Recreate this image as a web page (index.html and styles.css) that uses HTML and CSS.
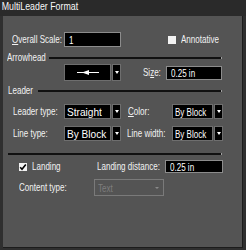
FILE: index.html
```html
<!DOCTYPE html>
<html>
<head>
<meta charset="utf-8">
<link rel="stylesheet" href="styles.css">
</head>
<body>
<div class="window">
  <div class="titlebar"><span class="ttext">MultiLeader Format</span></div>
  <div class="panel">
    <div class="row r1">
      <div class="lab w52"><span class="t"><u>O</u>verall Scale:</span></div>
      <div class="input w57"><span class="t">1</span></div>
      <div class="chk ml47"></div>
      <div class="lab ml5"><span class="t">Annotative</span></div>
    </div>

    <div class="hdr h-arrow">
      <div class="lab w42"><span class="t">Arrowhead</span></div>
      <div class="rule"></div>
    </div>

    <div class="row r-arrow">
      <div class="combo">
        <div class="cbox w47 center">
          <svg width="22" height="7" viewBox="0 0 22 7"><line x1="0" y1="3.5" x2="22" y2="3.5" stroke="#fff" stroke-width="1"/><polygon points="5,3.5 12,1 12,6" fill="#fff"/></svg>
        </div>
        <div class="cbtn"><span class="tri"></span></div>
      </div>
      <div class="lab ml22 w23"><span class="t">Si<u>z</u>e:</span></div>
      <div class="input w56 h14"><span class="t">0.25 in</span></div>
    </div>

    <div class="hdr h-leader">
      <div class="lab w30"><span class="t">Leader</span></div>
      <div class="rule"></div>
    </div>

    <div class="row r-lt">
      <div class="lab w51"><span class="t">Leader type:</span></div>
      <div class="combo">
        <div class="cbox w47"><span class="ct">Straight</span></div>
        <div class="cbtn"><span class="tri"></span></div>
      </div>
      <div class="lab ml7 w44"><span class="t"><u>C</u>olor:</span></div>
      <div class="combo">
        <div class="cbox w41"><span class="t">By Block</span></div>
        <div class="cbtn"><span class="tri"></span></div>
      </div>
    </div>

    <div class="row r-lt2">
      <div class="lab w51"><span class="t">Line type:</span></div>
      <div class="combo">
        <div class="cbox w47"><span class="ct">By Block</span></div>
        <div class="cbtn"><span class="tri"></span></div>
      </div>
      <div class="lab ml6 w45"><span class="t">Line width:</span></div>
      <div class="combo">
        <div class="cbox w41"><span class="t">By Block</span></div>
        <div class="cbtn"><span class="tri"></span></div>
      </div>
    </div>

    <div class="sep"></div>

    <div class="row r-land">
      <div class="chk checked">
        <svg width="8" height="8" viewBox="0 0 8 8"><path d="M1.2 4.2 L3 6.2 L6.8 1.4" fill="none" stroke="#000" stroke-width="1.6"/></svg>
      </div>
      <div class="lab ml5 w65"><span class="t">Landing</span></div>
      <div class="lab w68"><span class="t">Landing distance:</span></div>
      <div class="input w58 h13"><span class="t">0.25 in</span></div>
    </div>

    <div class="row r-ct">
      <div class="lab w75"><span class="t">Content type:</span></div>
      <div class="dcombo"><span class="t">Text</span><span class="dtri"></span></div>
    </div>
  </div>
</div>
</body>
</html>
```

FILE: styles.css
```css
html, body {
  margin: 0;
  padding: 0;
  background: #2f2f2f;
}
.window {
  width: 246px;
  height: 250px;
  background: #2f2f2f;
  font-family: "Liberation Sans", Arial, sans-serif;
  font-size: 11px;
  color: #f2f2f2;
  overflow: hidden;
}
.titlebar {
  height: 16px;
  background: #2a2a2a;
  display: flex;
  align-items: flex-start;
}
.ttext {
  display: inline-block;
  font-size: 10.5px;
  line-height: 13px;
  color: #f8f8f8;
  padding-left: 2px;
  white-space: nowrap;
  transform: scaleX(0.84);
  transform-origin: left center;
}
.panel {
  margin-left: 3px;
  width: 239px;
  height: 231px;
  background: #545454;
  border-right: 1px solid #1c1c1c;
  border-bottom: 1px solid #1c1c1c;
  display: flex;
  flex-direction: column;
}
.row {
  display: flex;
  align-items: center;
}
.t {
  display: inline-block;
  white-space: nowrap;
  transform: scaleX(0.73);
  transform-origin: left center;
}
.ct {
  display: inline-block;
  white-space: nowrap;
  font-size: 11px;
  transform: scaleX(0.92);
  transform-origin: left center;
}
.lab {
  white-space: nowrap;
  line-height: 13px;
  flex: none;
}
u { text-decoration: underline; text-underline-offset: 1px; }

.w23 { width: 23px; }
.w30 { width: 30px; }
.w42 { width: 42px; }
.w44 { width: 44px; }
.w45 { width: 45px; }
.w51 { width: 51px; }
.w52 { width: 52px; }
.w65 { width: 65px; }
.w68 { width: 68px; }
.w75 { width: 75px; }
.ml5 { margin-left: 5px; }
.ml6 { margin-left: 6px; }
.ml7 { margin-left: 7px; }
.ml22 { margin-left: 22px; }
.ml47 { margin-left: 47px; }

.input {
  flex: none;
  box-sizing: border-box;
  height: 15px;
  background: #000;
  border: 1px solid #8c8c8c;
  color: #fff;
  padding-left: 4px;
  display: flex;
  align-items: center;
  overflow: hidden;
}
.w56 { width: 56px; }
.w57 { width: 57px; }
.w58 { width: 58px; }
.h13 { height: 13px; }
.h14 { height: 14px; }

.chk {
  flex: none;
  width: 8px;
  height: 8px;
  background: #f2f2f2;
  display: flex;
}

.hdr {
  display: flex;
  align-items: center;
  height: 13px;
  padding-right: 20px;
}
.rule {
  flex: 1;
  height: 2px;
  background: #111;
  border-right: 1px solid #a0a0a0;
}
.sep {
  height: 2px;
  background: #111;
  margin-left: 5px;
  margin-right: 20px;
  border-right: 1px solid #a0a0a0;
}

.combo {
  flex: none;
  display: flex;
  align-items: stretch;
  gap: 1px;
  height: 100%;
}
.cbox {
  box-sizing: border-box;
  background: #000;
  border: 1px solid #6e6e6e;
  color: #fff;
  padding-left: 2px;
  display: flex;
  align-items: center;
  overflow: hidden;
}
.cbox.center { justify-content: center; padding-left: 0; }
.w41 { width: 41px; }
.w47 { width: 47px; }
.cbtn {
  box-sizing: border-box;
  width: 9px;
  background: #000;
  border: 1px solid #6e6e6e;
  display: flex;
  align-items: center;
  justify-content: center;
}
.tri {
  width: 0;
  height: 0;
  border-left: 2px solid transparent;
  border-right: 2px solid transparent;
  border-top: 3px solid #fff;
}

.dcombo {
  flex: none;
  box-sizing: border-box;
  width: 70px;
  height: 17px;
  border: 1px solid #7a7a7a;
  color: #7e7e7e;
  padding-left: 3px;
  display: flex;
  align-items: center;
  justify-content: space-between;
  padding-right: 4px;
}
.dtri {
  width: 0;
  height: 0;
  border-left: 2px solid transparent;
  border-right: 2px solid transparent;
  border-top: 2px solid #8a8a8a;
  margin-top: 1px;
}

.r1 { margin-top: 16px; height: 15px; padding-left: 9px; }
.h-arrow { margin-top: 4px; padding-left: 4px; }
.r-arrow { margin-top: 0; height: 17px; padding-left: 61px; }
.h-leader { margin-top: 3px; padding-left: 5px; }
.r-lt { margin-top: 7px; height: 15px; padding-left: 10px; }
.r-lt2 { margin-top: 7px; height: 15px; padding-left: 10px; }
.sep { margin-top: 12px; }
.r-land { margin-top: 5px; height: 13px; padding-left: 16px; }
.r-ct { margin-top: 6px; height: 17px; padding-left: 16px; }
```
